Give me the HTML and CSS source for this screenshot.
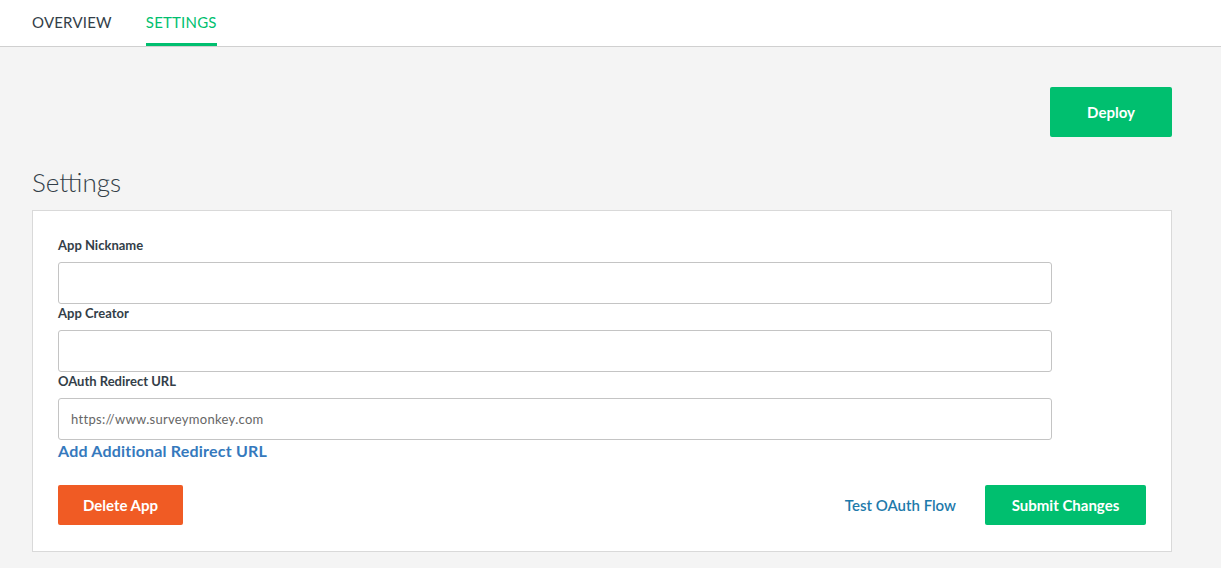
FILE: index.html
```html
<!DOCTYPE html>
<html lang="en">
<head>
    <meta charset="UTF-8">
    <meta name="viewport" content="width=device-width, initial-scale=1.0">
    <title>App Settings</title>
    <link rel="stylesheet" href="styles.css">
</head>
<body>
    <div class="tabs">
        <a href="#" class="tab">OVERVIEW</a>
        <a href="#" class="tab active">SETTINGS</a>
    </div>

    <div class="page">
        <div class="deployRow">
            <button class="btn btnGreen deploy">Deploy</button>
        </div>

        <h1>Settings</h1>

        <div class="card">
            <label for="nickname">App Nickname</label>
            <input type="text" id="nickname">

            <label for="creator">App Creator</label>
            <input type="text" id="creator">

            <label for="redirect">OAuth Redirect URL</label>
            <input type="text" id="redirect" value="https://www.surveymonkey.com">

            <a href="#" class="addLink">Add Additional Redirect URL</a>

            <div class="actions">
                <button class="btn btnOrange">Delete App</button>
                <div class="right">
                    <a href="#" class="testLink">Test OAuth Flow</a>
                    <button class="btn btnGreen">Submit Changes</button>
                </div>
            </div>
        </div>
    </div>
</body>
</html>
```

FILE: styles.css
```css
body {
    margin: 0;
    background: #f4f4f4;
    font-family: Lato, "Open Sans", sans-serif;
    color: #333e48;
}

.tabs {
    background: #fff;
    height: 46px;
    border-bottom: 1px solid #d0d0d0;
    display: flex;
    gap: 34px;
    padding-left: 32px;
}
.tab {
    display: block;
    font-size: 15px;
    letter-spacing: 0.2px;
    color: #333e48;
    text-decoration: none;
    line-height: 44px;
    border-bottom: 3px solid transparent;
    height: 43px;
}
.tab.active {
    color: #00bf6f;
    border-bottom-color: #00bf6f;
}

.page {
    padding: 40px 49px 0 32px;
}

.deployRow {
    display: flex;
    justify-content: flex-end;
}

.btn {
    border: none;
    border-radius: 2px;
    color: #fff;
    font-family: Lato, "Open Sans", sans-serif;
    font-weight: bold;
    font-size: 15px;
    height: 40px;
    cursor: pointer;
}
.btnGreen {
    background: #00bf6f;
}
.btnOrange {
    background: #f05b24;
    width: 125px;
}
.deploy {
    width: 122px;
    height: 50px;
}

h1 {
    font-weight: 300;
    font-size: 26px;
    margin: 29px 0 12px 0;
    line-height: 32px;
    color: #333e48;
}

.card {
    background: #fff;
    border: 1px solid #d9d9d9;
    padding: 25px 25px 26px 25px;
}

label {
    display: block;
    font-size: 13px;
    font-weight: bold;
    line-height: 18px;
    margin-bottom: 8px;
}

input {
    display: block;
    box-sizing: border-box;
    width: 994px;
    height: 42px;
    border: 1px solid #c4c4c4;
    border-radius: 3px;
    padding: 0 12px;
    font-family: Lato, "Open Sans", sans-serif;
    font-size: 13px;
    color: #666;
    letter-spacing: 0.3px;
}

.addLink {
    display: inline-block;
    font-size: 16px;
    letter-spacing: 0.2px;
    font-weight: bold;
    color: #3579bd;
    text-decoration: none;
    line-height: 22px;
}

.actions {
    display: flex;
    justify-content: space-between;
    align-items: center;
    margin-top: 23px;
}
.right {
    display: flex;
    align-items: center;
    gap: 29px;
}
.testLink {
    color: #1e7aab;
    font-size: 15px;
    font-weight: 600;
    text-decoration: none;
}
.right .btn {
    width: 161px;
}
```
